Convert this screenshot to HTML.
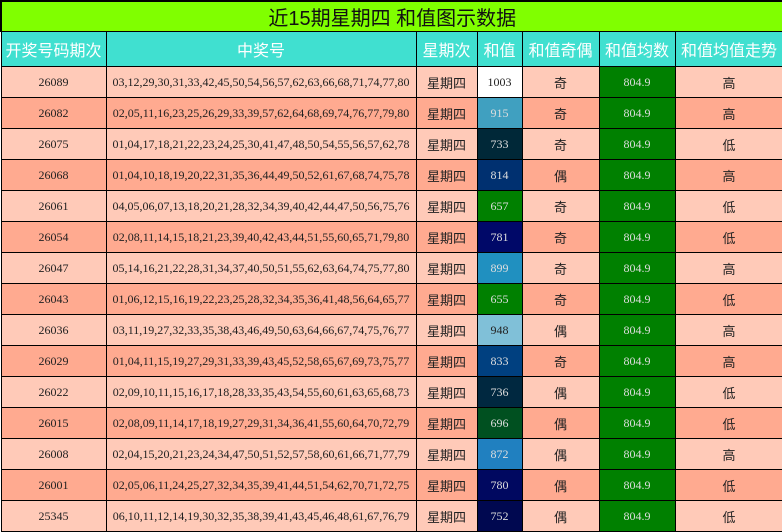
<!DOCTYPE html>
<html><head><meta charset="utf-8"><style>
*{margin:0;padding:0;box-sizing:border-box}
body{width:782px;height:532px;background:#fff;font-family:"Liberation Serif","Noto Serif CJK SC",serif;overflow:hidden}
table{border-collapse:collapse;table-layout:fixed;width:782px}
td,th{border:1px solid #000;text-align:center;font-size:12px;color:#222;height:31px;font-weight:normal;white-space:nowrap;overflow:hidden}
.t td{background:#80ff00;height:29px;font-size:20px;font-family:"Liberation Sans","Noto Sans CJK SC",sans-serif;color:#111;border-width:2px 1px 1px 2px}
th{background:#40e0d0;color:#fff;height:35px;font-size:16px;font-family:"Liberation Sans","Noto Sans CJK SC",sans-serif}
tr.a td{background:#ffcab8}
tr.b td{background:#ffaa90}
td.w{font-size:13px;font-family:"Liberation Sans","Noto Sans CJK SC",sans-serif}
tr td.g{background:#008000;color:#ddd}
td.s{color:#ddd}
</style></head><body>
<table>
<colgroup><col style="width:105px"><col style="width:310px"><col style="width:61px"><col style="width:45px"><col style="width:77px"><col style="width:76px"><col style="width:108px"></colgroup>
<tr class="t"><td colspan="7">近15期星期四 和值图示数据</td></tr>
<tr><th>开奖号码期次</th><th>中奖号</th><th>星期次</th><th>和值</th><th>和值奇偶</th><th>和值均数</th><th>和值均值走势</th></tr>
<tr class="a"><td>26089</td><td>03,12,29,30,31,33,42,45,50,54,56,57,62,63,66,68,71,74,77,80</td><td class="w">星期四</td><td style="background:#fff;color:#222">1003</td><td class="w">奇</td><td class="g">804.9</td><td class="w">高</td></tr>
<tr class="b"><td>26082</td><td>02,05,11,16,23,25,26,29,33,39,57,62,64,68,69,74,76,77,79,80</td><td class="w">星期四</td><td class="s" style="background:#40a0c0">915</td><td class="w">奇</td><td class="g">804.9</td><td class="w">高</td></tr>
<tr class="a"><td>26075</td><td>01,04,17,18,21,22,23,24,25,30,41,47,48,50,54,55,56,57,62,78</td><td class="w">星期四</td><td class="s" style="background:#002838">733</td><td class="w">奇</td><td class="g">804.9</td><td class="w">低</td></tr>
<tr class="b"><td>26068</td><td>01,04,10,18,19,20,22,31,35,36,44,49,50,52,61,67,68,74,75,78</td><td class="w">星期四</td><td class="s" style="background:#003070">814</td><td class="w">偶</td><td class="g">804.9</td><td class="w">高</td></tr>
<tr class="a"><td>26061</td><td>04,05,06,07,13,18,20,21,28,32,34,39,40,42,44,47,50,56,75,76</td><td class="w">星期四</td><td class="s" style="background:#008000">657</td><td class="w">奇</td><td class="g">804.9</td><td class="w">低</td></tr>
<tr class="b"><td>26054</td><td>02,08,11,14,15,18,21,23,39,40,42,43,44,51,55,60,65,71,79,80</td><td class="w">星期四</td><td class="s" style="background:#000868">781</td><td class="w">奇</td><td class="g">804.9</td><td class="w">低</td></tr>
<tr class="a"><td>26047</td><td>05,14,16,21,22,28,31,34,37,40,50,51,55,62,63,64,74,75,77,80</td><td class="w">星期四</td><td class="s" style="background:#2090c0">899</td><td class="w">奇</td><td class="g">804.9</td><td class="w">高</td></tr>
<tr class="b"><td>26043</td><td>01,06,12,15,16,19,22,23,25,28,32,34,35,36,41,48,56,64,65,77</td><td class="w">星期四</td><td class="s" style="background:#008000">655</td><td class="w">奇</td><td class="g">804.9</td><td class="w">低</td></tr>
<tr class="a"><td>26036</td><td>03,11,19,27,32,33,35,38,43,46,49,50,63,64,66,67,74,75,76,77</td><td class="w">星期四</td><td class="s" style="background:#80c0d8;color:#222">948</td><td class="w">偶</td><td class="g">804.9</td><td class="w">高</td></tr>
<tr class="b"><td>26029</td><td>01,04,11,15,19,27,29,31,33,39,43,45,52,58,65,67,69,73,75,77</td><td class="w">星期四</td><td class="s" style="background:#004080">833</td><td class="w">奇</td><td class="g">804.9</td><td class="w">高</td></tr>
<tr class="a"><td>26022</td><td>02,09,10,11,15,16,17,18,28,33,35,43,54,55,60,61,63,65,68,73</td><td class="w">星期四</td><td class="s" style="background:#002840">736</td><td class="w">偶</td><td class="g">804.9</td><td class="w">低</td></tr>
<tr class="b"><td>26015</td><td>02,08,09,11,14,17,18,19,27,29,31,34,36,41,55,60,64,70,72,79</td><td class="w">星期四</td><td class="s" style="background:#005020">696</td><td class="w">偶</td><td class="g">804.9</td><td class="w">低</td></tr>
<tr class="a"><td>26008</td><td>02,04,15,20,21,23,24,34,47,50,51,52,57,58,60,61,66,71,77,79</td><td class="w">星期四</td><td class="s" style="background:#2080c0">872</td><td class="w">偶</td><td class="g">804.9</td><td class="w">高</td></tr>
<tr class="b"><td>26001</td><td>02,05,06,11,24,25,27,32,34,35,39,41,44,51,54,62,70,71,72,75</td><td class="w">星期四</td><td class="s" style="background:#000860">780</td><td class="w">偶</td><td class="g">804.9</td><td class="w">低</td></tr>
<tr class="a"><td>25345</td><td>06,10,11,12,14,19,30,32,35,38,39,41,43,45,46,48,61,67,76,79</td><td class="w">星期四</td><td class="s" style="background:#000850">752</td><td class="w">偶</td><td class="g">804.9</td><td class="w">低</td></tr>
</table>
</body></html>
